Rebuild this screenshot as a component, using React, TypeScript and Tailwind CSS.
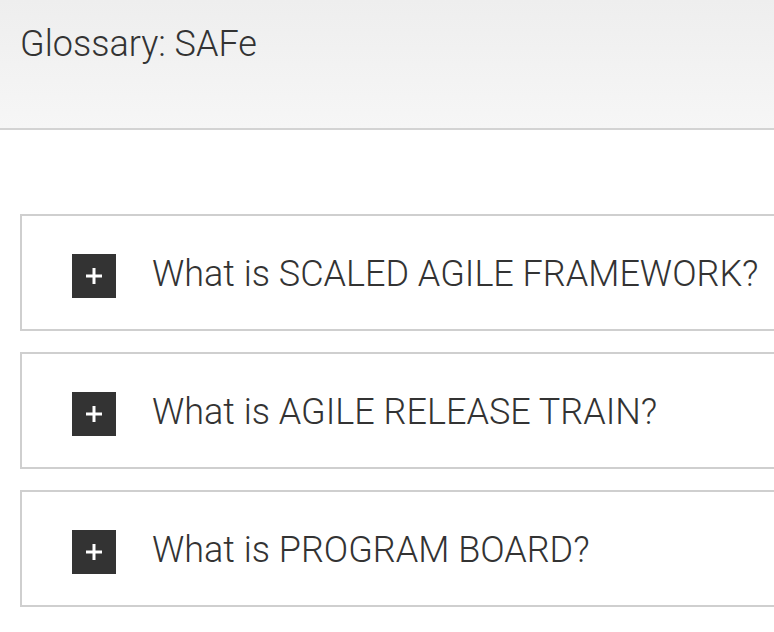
const questions = [
  "What is SCALED AGILE FRAMEWORK?",
  "What is AGILE RELEASE TRAIN?",
  "What is PROGRAM BOARD?",
];

function Question({ text }: { text: string }) {
  return (
    <div className="flex items-start gap-[36px] border-2 border-r-0 border-[#cfcfcf] bg-white pl-[50px] pt-[38px] pb-[31px] w-[780px]">
      <div className="flex h-[44px] w-[44px] shrink-0 items-center justify-center bg-[#333333]">
        <svg width="16" height="16" viewBox="0 0 16 16">
          <rect x="6.5" y="0" width="3" height="16" fill="#fff" />
          <rect x="0" y="6.5" width="16" height="3" fill="#fff" />
        </svg>
      </div>
      <span className="whitespace-nowrap text-[36px] font-light leading-[40px] text-[#333333]">{text}</span>
    </div>
  );
}

export default function App() {
  return (
    <div className="min-h-[632px] w-[774px] overflow-hidden bg-white font-['Roboto',sans-serif]">
      <div className="h-[130px] border-b-2 border-[#d3d3d3] bg-gradient-to-b from-[#eeeeee] to-[#f6f6f6] pl-[20px] pt-[24px]">
        <h1 className="text-[36px] font-light leading-[40px] text-[#333333]">Glossary: SAFe</h1>
      </div>
      <div className="flex flex-col gap-[21px] pl-[20px] pt-[84px]">
        {questions.map((q) => (
          <Question key={q} text={q} />
        ))}
      </div>
    </div>
  );
}
